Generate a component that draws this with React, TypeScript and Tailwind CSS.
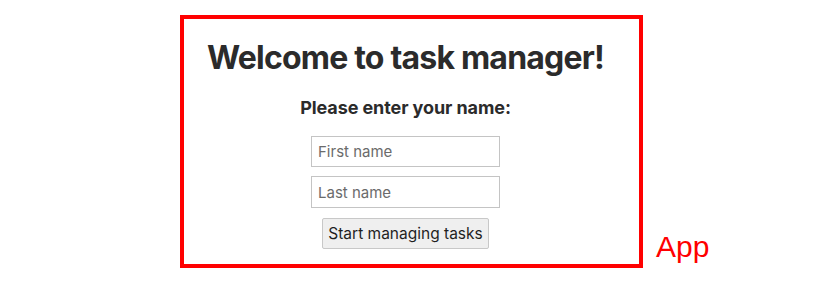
export default function App() {
  return (
    <div className="flex items-end pl-[180px] pt-[15px] font-['Inter',sans-serif]">
      <div className="flex h-[253px] w-[463px] flex-col items-center border-4 border-[#ff0000] pr-[12px] text-[#2b2b2b]">
        <h1 className="mt-[19px] text-[32px] font-bold leading-[40px] tracking-[-0.025em]">
          Welcome to task manager!
        </h1>
        <h2 className="mt-[18px] text-[18px] font-bold leading-6 tracking-[-0.005em]">Please enter your name:</h2>
        <form className="mt-[16px] flex flex-col items-center gap-[9px]">
          <input
            placeholder="First name"
            className="h-[31px] w-[189px] border border-[#c4c4c4] px-[6px] text-[15px] text-[#2b2b2b] placeholder:text-[#6b6b6b] outline-none"
          />
          <input
            placeholder="Last name"
            className="h-[32px] w-[189px] border border-[#c4c4c4] px-[6px] text-[15px] text-[#2b2b2b] placeholder:text-[#6b6b6b] outline-none"
          />
          <button
            type="button"
            className="mt-[1px] h-[31px] w-[167px] rounded-[2px] border border-[#c8c8c8] bg-[#efefef] text-[15.5px] text-[#1f1f1f]"
          >
            Start managing tasks
          </button>
        </form>
      </div>
      <span className="mb-[3px] ml-[13px] font-['Liberation_Sans',Arial,sans-serif] text-[30px] leading-[36px] text-[#ff0000]">
        App
      </span>
    </div>
  );
}
